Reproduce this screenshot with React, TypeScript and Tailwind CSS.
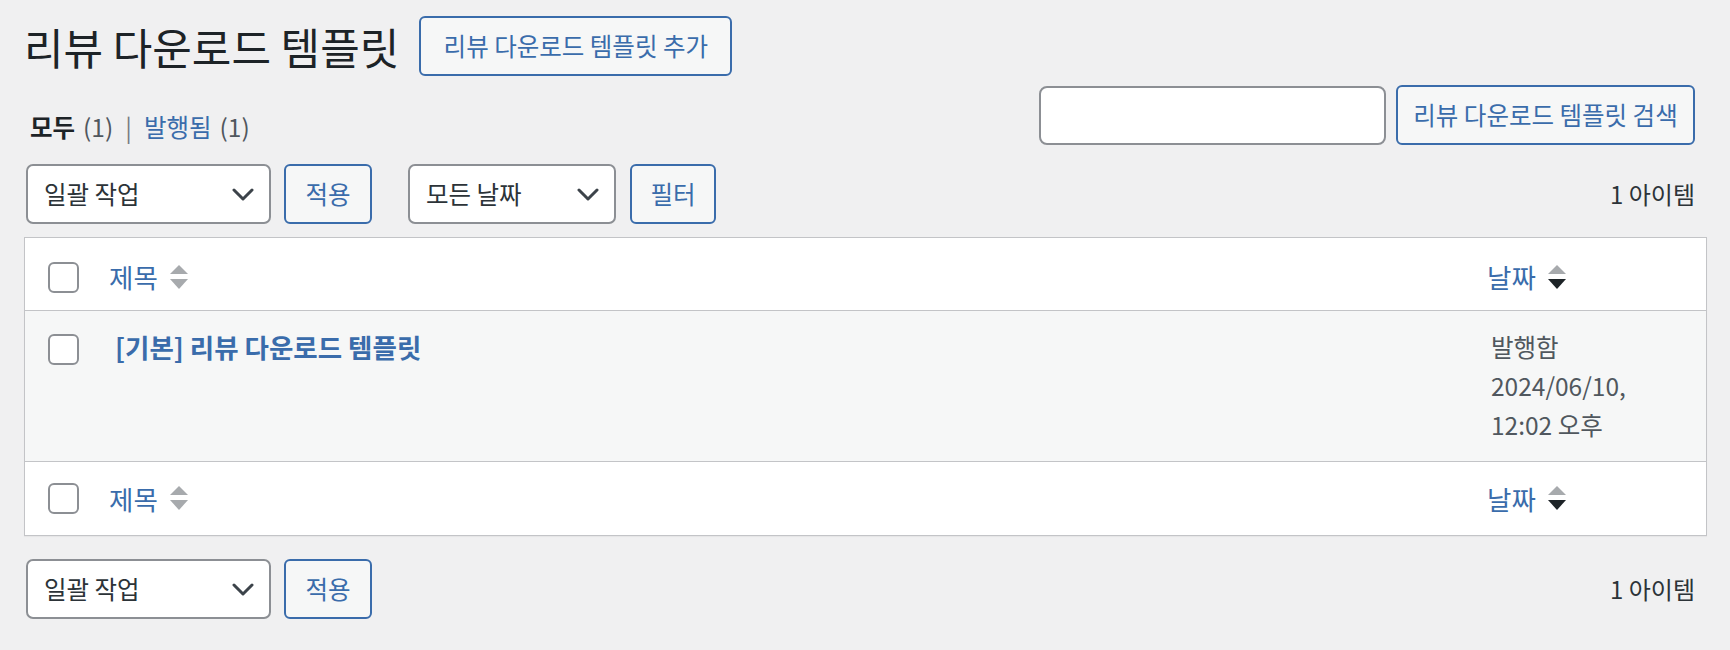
const BLUE = "text-[#3a6cab]";

function Chevron() {
  return (
    <svg width="22" height="13" viewBox="0 0 22 13" fill="none">
      <polyline points="2,2 11,11 20,2" stroke="#3c434a" strokeWidth="3" strokeLinecap="round" strokeLinejoin="round" />
    </svg>
  );
}

function SortArrows({ active }: { active?: boolean }) {
  return (
    <svg width="20" height="27" viewBox="0 0 20 27" className="ml-[11px]">
      <path d="M10 1 L19 10 L1 10 Z" fill="#a7aaad" />
      <path d="M1 15 L19 15 L10 25 Z" fill={active ? "#1d2327" : "#a7aaad"} />
    </svg>
  );
}

function Checkbox() {
  return <div className="h-[31px] w-[31px] rounded-[6px] border-2 border-[#8c8f94] bg-white" />;
}

function FakeSelect({ label, width }: { label: string; width: string }) {
  return (
    <div
      className={`flex h-[60px] ${width} items-center justify-between rounded-[7px] border-2 border-[#8c8f94] bg-white pl-[16px] pr-[15px] text-[24.5px] text-[#2c3338]`}
    >
      <span>{label}</span>
      <Chevron />
    </div>
  );
}

function Button({ label, className = "" }: { label: string; className?: string }) {
  return (
    <button
      className={`flex h-[60px] items-center justify-center rounded-[6px] border-2 border-[#3a6cab] bg-[#f6f7f7] text-[24.5px] ${BLUE} ${className}`}
    >
      {label}
    </button>
  );
}

function TableNav({ top }: { top?: boolean }) {
  return (
    <div className="flex h-[60px] items-center justify-between pl-[2px] pr-[12px]">
      <div className="flex items-center">
        <FakeSelect label="일괄 작업" width="w-[245px]" />
        <Button label="적용" className="ml-[13px] w-[88px]" />
        {top && (
          <>
            <FakeSelect label="모든 날짜" width="w-[208px] ml-[36px]" />
            <Button label="필터" className="ml-[14px] w-[86px]" />
          </>
        )}
      </div>
      <span className="text-[24px] text-[#2c3338]">1 아이템</span>
    </div>
  );
}

function HeadRow({ footer }: { footer?: boolean }) {
  return (
    <div className={`flex h-[73px] items-center ${footer ? "" : "border-b border-[#c3c4c7] pt-[6px]"}`}>
      <div className="w-[84px] pl-[23px]">
        <Checkbox />
      </div>
      <div className={`flex flex-1 items-center text-[26.5px] ${BLUE}`}>
        제목
        <SortArrows />
      </div>
      <div className={`flex w-[219px] items-center text-[26.5px] ${BLUE}`}>
        날짜
        <SortArrows active />
      </div>
    </div>
  );
}

export default function App() {
  return (
    <div className="min-h-[650px] bg-[#f0f0f1] pl-[24px] pr-[23px] pt-[16px] font-[family-name:'Noto_Sans_CJK_KR',sans-serif] text-[#1d2327]">
      <div className="flex items-center">
        <h1 className="text-[43px] leading-[59px] font-normal">리뷰 다운로드 템플릿</h1>
        <Button label="리뷰 다운로드 템플릿 추가" className="ml-[20px] h-[59px] w-[313px]" />
      </div>

      <div className="mt-[9px] flex items-end justify-between pr-[12px]">
        <ul className="flex items-center pb-[2px] pl-[6px] text-[24.5px] leading-[32px]">
          <li className="font-bold text-[#1d2327]">모두</li>
          <li className="ml-[8px] text-[#50575e]">(1)</li>
          <li className="mx-[12px] text-[#787c82]">|</li>
          <li className={BLUE}>발행됨</li>
          <li className="ml-[8px] text-[#50575e]">(1)</li>
        </ul>
        <div className="flex items-center gap-[10px]">
          <input className="h-[59px] w-[347px] rounded-[8px] border-2 border-[#8c8f94] bg-white" />
          <Button label="리뷰 다운로드 템플릿 검색" className="h-[59px] w-[299px]" />
        </div>
      </div>

      <div className="mt-[19px]">
        <TableNav top />
      </div>

      <div className="mt-[13px] border border-[#c3c4c7] bg-white shadow-[0_1px_1px_rgba(0,0,0,0.04)]">
        <HeadRow />
        <div className="flex h-[151px] items-start border-b border-[#c3c4c7] bg-[#f6f7f7]">
          <div className="w-[84px] pl-[23px] pt-[23px]">
            <Checkbox />
          </div>
          <div className={`flex-1 pl-[6px] pt-[16px] text-[26.5px] font-bold leading-[40px] ${BLUE}`}>
            [기본] 리뷰 다운로드 템플릿
          </div>
          <div className="w-[219px] pl-[4px] pt-[16px] text-[24.5px] leading-[39px] text-[#50575e]">
            <div>발행함</div>
            <div>2024/06/10,</div>
            <div>12:02 오후</div>
          </div>
        </div>
        <HeadRow footer />
      </div>

      <div className="mt-[23px]">
        <TableNav />
      </div>
    </div>
  );
}
